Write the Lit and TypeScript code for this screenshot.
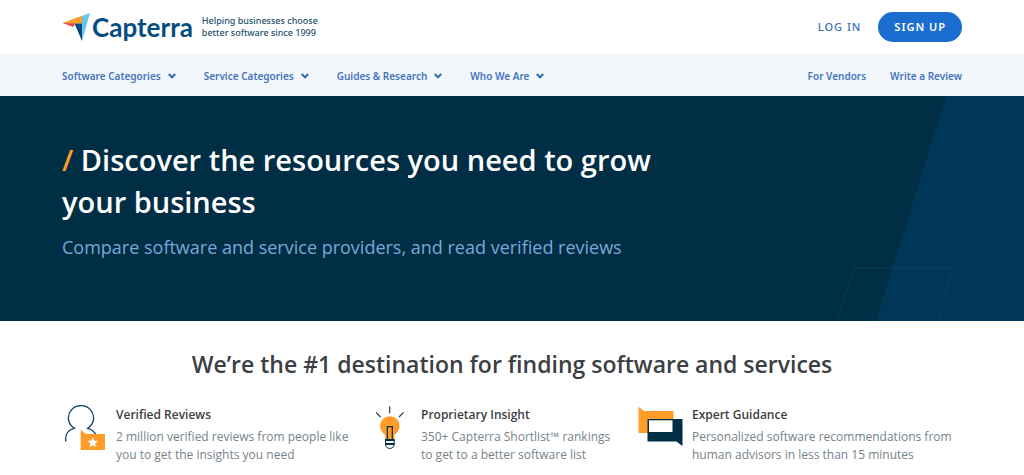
import { LitElement, html, css, svg } from "lit";
import { customElement } from "lit/decorators.js";

const chevron = html`<svg class="chevron" viewBox="0 0 8 6" aria-hidden="true"><path d="M0.800 1 4 4.400 7.200 1" /></svg>`;

const reviewer = html`<svg width="44" height="48" viewBox="0 0 44 48" aria-hidden="true">
  <path d="M3.700 36.500V33C3.700 27.500 7.500 24.500 12.300 23.300A12.600 12.300 0 1 1 25.700 23.300C30 24.500 33 27 34 30.500" fill="none" stroke="#17405f" stroke-width="1.300" />
  <path d="M18.700 25 24 29H43V45H18.700Z" fill="#ff9d28" />
  <path d="M30.700 32.300 32.200 35.500 35.700 36 33.200 38.500 33.800 42 30.700 40.300 27.600 42 28.200 38.500 25.700 36 29.200 35.500Z" fill="#fff" />
</svg>`;

const bulb = html`<svg width="32" height="48" viewBox="0 0 32 48" aria-hidden="true">
  <path d="M2 7.300 6.500 12M15.700 1.500V8.200M29.500 7.300 25 12" fill="none" stroke="#17405f" stroke-width="1.200" />
  <path d="M11.300 34V30C8.300 28 6 25 6 21A9.800 9.800 0 0 1 25.600 21C25.600 25 23.300 28 20.300 30V34Z" fill="#ff9d28" />
  <path d="M13.300 34V21.700H18.300V34" fill="none" stroke="#002e45" stroke-width="1.200" />
  <path d="M11.500 34.500V39.200A4.300 4.300 0 0 0 20.100 39.200V34.500Z" fill="#fff" stroke="#002e45" stroke-width="1" />
  <path d="M11 34H20.600V36H11ZM11 38H20.600V40H11Z" fill="#002e45" />
</svg>`;

const chat = html`<svg width="46" height="44" viewBox="0 0 46 44" aria-hidden="true">
  <path d="M0.500 1.700 6 6H35.500V28H0.500Z" fill="#ff9d28" />
  <path d="M9.500 14H44.500V41L38.500 36.500H9.500Z" fill="#002e45" />
  <path d="M11 15.300H34.500V27H11Z" fill="#fff" />
</svg>`;

const mark = html`<svg class="mark" viewBox="0 0 28 29" aria-hidden="true">
  <path d="M0.500 10 28 0 20 28 19 10Z" fill="#68c5ed" />
  <path d="M0.500 10 20 3V10.500H12Z" fill="#ff9d28" />
  <path d="M0.500 10 13 10.200 11.500 14Z" fill="#e54747" />
  <path d="M12.500 10.500H20V28Z" fill="#044d80" />
</svg>`;

const dots = [0, 1, 2, 3, 4, 5, 6, 7, 8, 9, 10, 11, 12, 13].map((row) =>
  svg`<path d="M${180 - row * 3} ${116.5 + row * 8}H200" />`
);

const menus = ["Software Categories", "Service Categories", "Guides & Research", "Who We Are"];

const features = [
  { icon: reviewer, cls: "wide", title: "Verified Reviews", lines: ["2 million verified reviews from people like", "you to get the insights you need"] },
  { icon: bulb, cls: "slim", title: "Proprietary Insight", lines: ["350+ Capterra Shortlist™ rankings", "to get to a better software list"] },
  { icon: chat, cls: "wide", title: "Expert Guidance", lines: ["Personalized software recommendations from", "human advisors in less than 15 minutes"] },
];

@customElement("app-root")
export class AppRoot extends LitElement {
  static styles = css`
    :host {
      display: block;
      background: #fff;
      font-family: "Open Sans", "Noto Sans", sans-serif;
      color: #3c4043;
    }
    * { box-sizing: border-box; }
    a { color: inherit; text-decoration: none; }
    h1, h2, h3, p { margin: 0; }
    .wrap {
      width: 88%;
      max-width: 900px;
      margin: 0 auto;
    }
    .bar {
      display: flex;
      align-items: center;
      justify-content: space-between;
      font-family: "Noto Sans", sans-serif;
    }
    .top { height: 54px; }
    .brand { display: flex; align-items: center; }
    .mark { width: 28px; height: 29px; }
    .name {
      font: 700 26px/32px Lato, sans-serif;
      color: #044d80;
      margin: 0 9px 0 2px;
    }
    .tagline {
      font-size: 9px;
      line-height: 12px;
      font-weight: 500;
      color: #23506e;
    }
    .account {
      display: flex;
      align-items: center;
      gap: 17px;
      font-size: 11px;
      line-height: 14px;
      font-weight: 500;
      letter-spacing: 1px;
      color: #3b6fb8;
    }
    .signup {
      font: inherit;
      font-weight: 600;
      letter-spacing: inherit;
      color: #fff;
      background: #1c6dd0;
      border: 0;
      border-radius: 15px;
      height: 30px;
      padding: 0 16px;
    }
    .strip { background: #f2f7fc; }
    .nav {
      height: 42px;
      padding-top: 2px;
      font-size: 10px;
      line-height: 14px;
      font-weight: 600;
      color: #4674bd;
    }
    .menus { display: flex; gap: 28px; }
    .links { display: flex; gap: 24px; }
    .menu {
      display: flex;
      align-items: center;
      gap: 7px;
      font: inherit;
      color: inherit;
      background: none;
      border: 0;
      padding: 0;
    }
    .chevron {
      width: 8px;
      height: 6px;
      fill: none;
      stroke: #2a69a8;
      stroke-width: 2;
    }
    .hero {
      display: grid;
      background: #002e45;
      min-height: 225px;
    }
    .hero > * { grid-area: 1 / 1; }
    .art { justify-self: end; width: 200px; height: 225px; }
    .copy { padding: 43px 0 60px; }
    .headline {
      font-size: 29px;
      line-height: 42px;
      font-weight: 600;
      color: #fff;
    }
    .slash { color: #ff9d28; }
    .sub {
      font-size: 18px;
      line-height: 28px;
      margin-top: 10px;
      color: #7aa7d9;
    }
    .title {
      font-size: 23px;
      line-height: 34px;
      font-weight: 600;
      text-align: center;
      padding-top: 26px;
    }
    .features {
      display: grid;
      grid-template-columns: 52fr 44fr 54fr;
      padding: 24px 0 12px;
    }
    .feature { display: flex; }
    .icon { flex: none; width: 54px; }
    .slim .icon { width: 47px; }
    .text { white-space: nowrap; }
    .label {
      font-size: 12px;
      line-height: 20px;
      font-weight: 600;
    }
    .body {
      font-size: 12px;
      line-height: 18px;
      margin-top: 3px;
      color: #75838c;
    }
  `;

  render() {
    return html`
      <header>
        <div class="wrap bar top">
          <div class="brand">
            ${mark}<a class="name" href="#">Capterra</a>
            <span class="tagline">Helping businesses choose<br />better software since 1999</span>
          </div>
          <div class="account">
            <a href="#">LOG IN</a>
            <button class="signup">SIGN UP</button>
          </div>
        </div>
        <nav class="strip">
          <div class="wrap bar nav">
            <div class="menus">
              ${menus.map((m) => html`<button class="menu">${m} ${chevron}</button>`)}
            </div>
            <div class="links"><a href="#">For Vendors</a><a href="#">Write a Review</a></div>
          </div>
        </nav>
      </header>
      <main>
        <section class="hero">
          <svg class="art" viewBox="0 0 200 225" aria-hidden="true">
            <path d="M122 0H200V225H52Z" fill="#003759" />
            <g stroke="#0d4566" stroke-width="1" stroke-dasharray="1 4" opacity="0.6">${dots}</g>
            <path d="M12 225 30 172H129L114 225" fill="none" stroke="#0d4460" stroke-width="1" opacity="0.7" />
          </svg>
          <div class="wrap copy">
            <h1 class="headline"><span class="slash">/</span> Discover the resources you need to grow<br />your business</h1>
            <p class="sub">Compare software and service providers, and read verified reviews</p>
          </div>
        </section>
        <section class="wrap">
          <h2 class="title">We’re the #1 destination for finding software and services</h2>
          <div class="features">
            ${features.map((f) => html`
              <article class="feature ${f.cls}">
                <div class="icon">${f.icon}</div>
                <div class="text">
                  <h3 class="label">${f.title}</h3>
                  <p class="body">${f.lines[0]}<br />${f.lines[1]}</p>
                </div>
              </article>`)}
          </div>
        </section>
      </main>
    `;
  }
}
